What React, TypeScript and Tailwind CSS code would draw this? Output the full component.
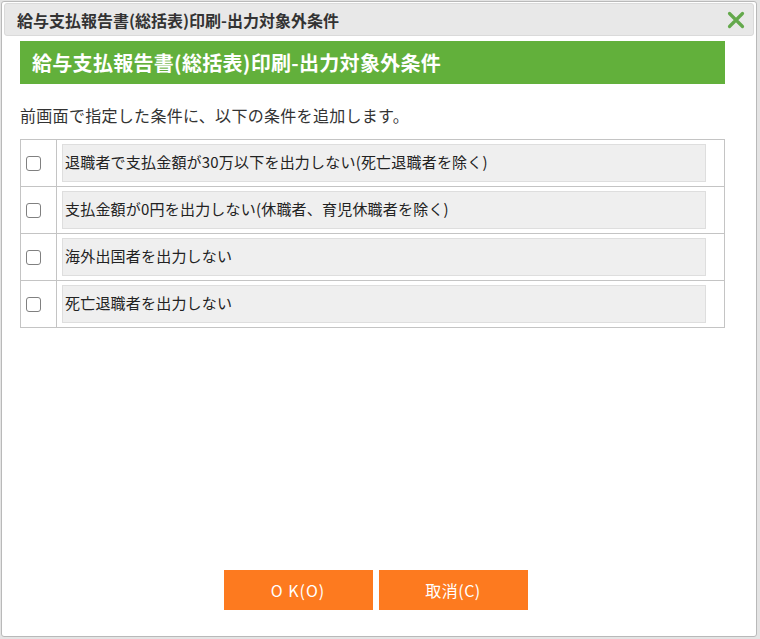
const items = [
  "退職者で支払金額が30万以下を出力しない(死亡退職者を除く)",
  "支払金額が0円を出力しない(休職者、育児休職者を除く)",
  "海外出国者を出力しない",
  "死亡退職者を出力しない",
];

export default function App() {
  return (
    <div
      className="h-[639px] w-[760px] overflow-hidden bg-[#e4e4e4] pl-[1px] pt-[1px]"
      style={{ fontFamily: '"Noto Sans CJK JP", "Noto Sans", sans-serif' }}
    >
      <div className="flex h-[636px] w-[756px] flex-col rounded-[3px] border border-[#b9b9b9] bg-white px-[2px] pt-[1px]">
        {/* Title bar */}
        <div className="flex h-[33px] items-center justify-between rounded-[3px] border border-[#dadada] bg-[#e8e8e8] pl-[12px] pr-[8px]">
          <span className="text-[16px] font-bold leading-none text-[#333]">
            給与支払報告書(総括表)印刷-出力対象外条件
          </span>
          <svg width="18" height="18" viewBox="0 0 18 18" className="mt-[1px]">
            <path
              d="M2.5 2.5 L15.5 15.5 M15.5 2.5 L2.5 15.5"
              stroke="#64a94c"
              strokeWidth="3.2"
              strokeLinecap="round"
            />
          </svg>
        </div>

        {/* Content */}
        <div className="ml-[16px] mt-[5px] flex w-[705px] flex-1 flex-col">
          <div className="flex h-[43px] items-center bg-[#62b03b] pl-[12px] text-[20px] font-bold tracking-[0.3px] text-white">
            給与支払報告書(総括表)印刷-出力対象外条件
          </div>

          <p className="mt-[21px] text-[16px] leading-[20px] tracking-[0.3px] text-[#333]">
            前画面で指定した条件に、以下の条件を追加します。
          </p>

          <div className="mt-[14px] border border-b-0 border-[#c4c4c4]">
            {items.map((label) => (
              <div key={label} className="flex h-[47px] border-b border-[#c4c4c4]">
                <div className="flex w-[36px] items-center border-r border-[#c4c4c4] pl-[5px]">
                  <span className="block h-[15px] w-[15px] rounded-[3px] border border-[#808080] bg-white" />
                </div>
                <div className="flex flex-1 items-center pb-[4px] pl-[5px] pr-[18px] pt-[3px]">
                  <div className="flex h-[38px] w-full items-center border border-[#dedede] bg-[#efefef] pl-[2px] text-[15px] tracking-[0.2px] text-[#222]">
                    {label}
                  </div>
                </div>
              </div>
            ))}
          </div>

          <div className="flex-1" />
        </div>

        {/* Buttons */}
        <div className="mb-[26px] flex justify-center gap-[6px] pr-[7px]">
          <button className="h-[40px] w-[149px] bg-[#fd7a1f] text-[16px] tracking-[1px] text-white">
            O K(O)
          </button>
          <button className="h-[40px] w-[149px] bg-[#fd7a1f] text-[16px] tracking-[0.5px] text-white">
            取消(C)
          </button>
        </div>
      </div>
    </div>
  );
}
